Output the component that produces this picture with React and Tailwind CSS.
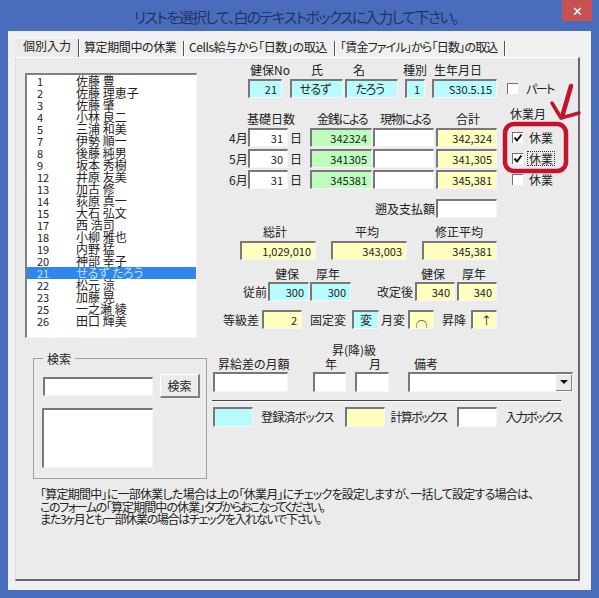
import React from 'react';

const staff = [
  ['1', '佐藤 豊'], ['2', '佐藤 理恵子'], ['3', '佐藤 肇'], ['4', '小林 良二'], ['5', '三浦 和美'],
  ['7', '伊勢 順一'], ['8', '後藤 純男'], ['9', '坂本 秀樹'], ['12', '井原 友美'], ['13', '加古 修'],
  ['14', '荻原 真一'], ['15', '大石 弘文'], ['17', '西 浩司'], ['18', '小柳 雅也'], ['19', '内野 猛'],
  ['20', '神部 幸子'], ['21', 'せるず たろう'], ['22', '松元 涼'], ['23', '加藤 晃'], ['25', '一之瀬 綾'], ['26', '田口 輝美'],
];

const tones = {
  white: 'bg-white',
  cyan: 'bg-[#b8fbfd]',
  yellow: 'bg-[#ffffc0]',
  green: 'bg-[#bdfcbd]',
};

// sunken win32 style text box
const Field = ({ tone = 'white', className = '', children }) => (
  <div className={`flex items-center justify-end overflow-hidden shrink-0 pr-[4px] text-[11px] leading-none border-t-2 border-l-2 border-t-[#787878] border-l-[#787878] border-r border-b border-r-[#f6f6f6] border-b-[#f6f6f6] ${tones[tone]} ${className}`}>
    {children}
  </div>
);

const Label = ({ className = '', children }) => (
  <div className={`shrink-0 h-[12px] leading-[12px] text-[12px] whitespace-nowrap text-center ${className}`}>{children}</div>
);

const CheckBox = ({ checked, className = '' }) => (
  <div className={`shrink-0 w-[11px] h-[11px] bg-white border-t border-l border-[#707070] ${className}`}>
    {checked && (
      <svg viewBox="0 0 10 10" className="w-[10px] h-[10px]">
        <path d="M1.5 4.5 L4 7.5 L8.5 1.5" fill="none" stroke="#111" strokeWidth="2" />
      </svg>
    )}
  </div>
);

const Tabs = () => (
  <div className="flex h-[20px] items-center text-[12px] leading-[12px] whitespace-nowrap">
    <div className="shrink-0 w-[63px] h-[20px] pl-[8px] pt-[2px] bg-[#ebebeb] border-t border-t-white">個別入力</div>
    <div className="shrink-0 w-[2px] h-[18px] mt-[2px] border-l border-r border-l-[#555] border-r-white" />
    <div className="shrink-0 ml-[4px] w-[92px] tracking-[-0.4px]">算定期間中の休業</div>
    <div className="shrink-0 ml-[7px] w-[2px] h-[15px] mt-[2px] border-l border-r border-l-[#555] border-r-white" />
    <div className="shrink-0 ml-[4px] w-[139px] tracking-[-0.4px]">Cells給与から「日数」の取込</div>
    <div className="shrink-0 ml-[6px] w-[2px] h-[15px] mt-[2px] border-l border-r border-l-[#555] border-r-white" />
    <div className="shrink-0 ml-[4px] w-[158px] tracking-[-0.8px]">「賃金ファイル」から「日数」の取込</div>
    <div className="shrink-0 ml-[6px] w-[2px] h-[15px] mt-[2px] border-l border-r border-l-[#555] border-r-white" />
  </div>
);

const StaffList = () => (
  <div className="ml-[9px] w-[172px] h-[265px] bg-white border-t-2 border-l-2 border-t-[#808080] border-l-[#808080] border-r border-b border-r-[#f6f6f6] border-b-[#f6f6f6]">
    {staff.map(([no, name]) => (
      <div key={no} className={`flex h-[12px] leading-[12px] text-[12px] ${no === '21' ? 'bg-[#3385ee] text-[#b8e8ff]' : 'text-[#222]'}`}>
        <div className="w-[49px] pl-[10px] text-[11px] shrink-0">{no}</div>
        <div className="whitespace-pre">{name}</div>
      </div>
    ))}
  </div>
);

const SearchGroup = () => (
  <div className="ml-[17px] mt-[20px] w-[174px] h-[121px] border border-[#a0a0a0]">
    <div className="w-fit -mt-[6px] ml-[9px] px-[4px] h-[12px] leading-[12px] text-[12px] bg-[#ebebeb]">検索</div>
    <div className="flex items-start mt-[9px]">
      <Field className="ml-[9px] mt-[3px] w-[110px] h-[19px]" />
      <div className="ml-[7px] w-[40px] h-[24px] flex items-center justify-center text-[12px] bg-[#ebebeb] border-t border-l border-t-white border-l-white border-r-2 border-b-2 border-r-[#808080] border-b-[#808080]">検索</div>
    </div>
    <Field className="ml-[8px] mt-[10px] w-[111px] h-[60px]" />
  </div>
);

const PayRow = ({ month, days, cash, total }) => (
  <div className="flex items-center h-[19px]">
    <Label className="ml-[17px] w-[16px]">{month}</Label>
    <Field className="ml-[3px] w-[40px] h-[19px]">{days}</Field>
    <Label className="ml-[2px] w-[12px]">日</Label>
    <Field tone="green" className="ml-[8px] w-[62px] h-[19px]">{cash}</Field>
    <Field className="ml-[1px] w-[61px] h-[19px]" />
    <Field tone="yellow" className="ml-[2px] w-[61px] h-[19px]">{total}</Field>
  </div>
);

const LeaveCheck = ({ checked, focused }) => (
  <div className="flex items-center h-[21px] ml-[15px]">
    <CheckBox checked={checked} />
    <div className={`ml-[4px] px-[1px] h-[15px] leading-[14px] text-[12px] border border-dotted ${focused ? 'border-[#333]' : 'border-transparent'}`}>休業</div>
  </div>
);

const RightPane = () => (
  <div className="w-[362px] shrink-0 pt-[6px]">
    <div className="flex">
      <Label className="ml-[38px] w-[38px]">健保No</Label>
      <Label className="ml-[23px] w-[12px]">氏</Label>
      <Label className="ml-[30px] w-[12px]">名</Label>
      <Label className="ml-[38px] w-[24px]">種別</Label>
      <Label className="ml-[7px] w-[48px]">生年月日</Label>
    </div>
    <div className="flex items-center mt-[3px]">
      <Field tone="cyan" className="ml-[36px] w-[34px] h-[19px]">21</Field>
      <Field tone="cyan" className="ml-[8px] w-[53px] h-[19px] !justify-center !text-[12px] tracking-[-0.8px]">せるず</Field>
      <Field tone="cyan" className="ml-[2px] w-[53px] h-[19px] !justify-center !text-[12px] tracking-[-0.8px]">たろう</Field>
      <Field tone="cyan" className="ml-[7px] w-[20px] h-[19px]">1</Field>
      <Field tone="cyan" className="ml-[7px] w-[65px] h-[19px]">S30.5.15</Field>
      <CheckBox className="ml-[10px]" />
      <Label className="ml-[8px] w-[26px] tracking-[-1.5px]">パート</Label>
    </div>

    <div className="flex mt-[10px]">
      <div className="w-[285px] shrink-0">
        <div className="flex mt-[5px]">
          <Label className="ml-[35px] w-[47px]">基礎日数</Label>
          <Label className="ml-[23px] w-[50px] tracking-[-1.2px]">金銭による</Label>
          <Label className="ml-[13px] w-[50px] tracking-[-1.2px]">現物による</Label>
          <Label className="ml-[26px] w-[24px]">合計</Label>
        </div>
        <div className="flex flex-col gap-[2px] mt-[3px]">
          <PayRow month="4月" days="31" cash="342324" total="342,324" />
          <PayRow month="5月" days="30" cash="341305" total="341,305" />
          <PayRow month="6月" days="31" cash="345381" total="345,381" />
        </div>
      </div>
      <div>
        <Label className="ml-[13px] w-[36px]">休業月</Label>
        <div className="mt-[7px]">
          <LeaveCheck checked />
          <LeaveCheck checked focused />
          <LeaveCheck />
        </div>
      </div>
    </div>

    <div className="flex items-center mt-[9px]">
      <Label className="ml-[163px] w-[60px]">遡及支払額</Label>
      <Field className="ml-[1px] w-[61px] h-[19px]" />
    </div>

    <div className="flex mt-[8px]">
      <Label className="ml-[51px] w-[24px]">総計</Label>
      <Label className="ml-[68px] w-[24px]">平均</Label>
      <Label className="ml-[56px] w-[48px]">修正平均</Label>
    </div>
    <div className="flex mt-[3px]">
      <Field tone="yellow" className="ml-[28px] w-[76px] h-[19px]">1,029,010</Field>
      <Field tone="yellow" className="ml-[15px] w-[76px] h-[19px]">343,003</Field>
      <Field tone="yellow" className="ml-[15px] w-[75px] h-[19px]">345,381</Field>
    </div>

    <div className="flex mt-[8px]">
      <Label className="ml-[63px] w-[24px]">健保</Label>
      <Label className="ml-[17px] w-[24px]">厚年</Label>
      <Label className="ml-[81px] w-[24px]">健保</Label>
      <Label className="ml-[17px] w-[24px]">厚年</Label>
    </div>
    <div className="flex items-center mt-[2px]">
      <Label className="ml-[31px] w-[24px]">従前</Label>
      <Field tone="cyan" className="ml-[1px] w-[41px] h-[19px]">300</Field>
      <Field tone="cyan" className="ml-[1px] w-[41px] h-[19px]">300</Field>
      <Label className="ml-[26px] w-[36px]">改定後</Label>
      <Field tone="yellow" className="ml-[2px] w-[40px] h-[19px]">340</Field>
      <Field tone="yellow" className="ml-[2px] w-[40px] h-[19px]">340</Field>
    </div>

    <div className="flex items-center mt-[9px]">
      <Label className="ml-[11px] w-[36px]">等級差</Label>
      <Field tone="yellow" className="ml-[3px] w-[40px] h-[19px]">2</Field>
      <Label className="ml-[8px] w-[36px]">固定変</Label>
      <Field tone="cyan" className="ml-[6px] w-[27px] h-[19px] !justify-center !pr-0 !text-[12px]">変</Field>
      <Label className="ml-[2px] w-[24px]">月変</Label>
      <Field tone="yellow" className="ml-[3px] w-[26px] h-[19px] !justify-center !pr-0 !items-start pt-[8px] !text-[12px]">○</Field>
      <Label className="ml-[8px] w-[24px]">昇降</Label>
      <Field tone="yellow" className="ml-[5px] w-[26px] h-[19px]">↑</Field>
    </div>

    <Label className="ml-[118px] mt-[15px] w-[48px]">昇(降)級</Label>
    <div className="flex mt-[2px]">
      <Label className="ml-[6px] w-[70px]">昇給差の月額</Label>
      <Label className="ml-[37px] w-[12px]">年</Label>
      <Label className="ml-[32px] w-[12px]">月</Label>
      <Label className="ml-[33px] w-[24px]">備考</Label>
    </div>
    <div className="flex mt-[2px]">
      <Field className="ml-[1px] w-[75px] h-[20px]" />
      <Field className="ml-[25px] w-[33px] h-[20px]" />
      <Field className="ml-[9px] w-[34px] h-[20px]" />
      <Field className="ml-[19px] w-[165px] h-[20px] !pr-0">
        <div className="w-[16px] h-[16px] flex items-center justify-center bg-[#ebebeb] border-r border-b border-[#808080]">
          <svg viewBox="0 0 8 4" className="w-[8px] h-[4px]">
            <path d="M0 0 H8 L4 4 Z" fill="#111" />
          </svg>
        </div>
      </Field>
    </div>

    <div className="mt-[8px] w-[349px] h-[2px] border-t border-b border-t-[#444] border-b-white" />

    <div className="flex items-center mt-[5px]">
      <Field tone="cyan" className="ml-[1px] w-[40px] h-[20px]" />
      <Label className="ml-[8px] w-[69px] tracking-[-0.8px]">登録済ボックス</Label>
      <Field tone="yellow" className="ml-[15px] w-[40px] h-[20px]" />
      <Label className="ml-[5px] w-[57px] tracking-[-1.7px]">計算ボックス</Label>
      <Field className="ml-[10px] w-[40px] h-[20px]" />
      <Label className="ml-[8px] w-[57px] tracking-[-1.7px]">入力ボックス</Label>
    </div>
  </div>
);

// hand drawn red marking on top of the screenshot
const RedMark = () => (
  <svg className="absolute left-0 top-0 pointer-events-none" width="599" height="598" viewBox="0 0 599 598">
    <rect x="505" y="124" width="61" height="47" rx="9" fill="none" stroke="#c4122f" strokeWidth="4.5" />
    <path d="M571 86 L562 117" fill="none" stroke="#c4122f" strokeWidth="4.5" strokeLinecap="round" />
    <path d="M552 103 L561 118 L579 113" fill="none" stroke="#c4122f" strokeWidth="3.5" strokeLinecap="round" strokeLinejoin="round" />
  </svg>
);

const App = () => (
  <div className="relative w-[599px] h-[598px] overflow-hidden bg-[#4a6cbd] text-[#222] font-['Noto_Sans_CJK_JP','Noto_Sans',sans-serif] [font-feature-settings:'palt']">
    <div className="h-[31px] flex items-center justify-center pt-[3px] pr-[7px] text-[15px] tracking-[-1.6px] text-[#1f3564]">
      リストを選択して、白のテキストボックスに入力して下さい。
    </div>
    <div className="absolute right-[7px] top-0 w-[30px] h-[21px] flex items-center justify-center bg-[#c75050] text-white text-[13px] leading-none">✕</div>

    <div className="mx-[8px] h-[559px] bg-[#f0f0f0] pt-[6px] pl-[7px]">
      <Tabs />
      <div className="w-[565px] h-[524px] bg-[#ebebeb] border-t border-t-white border-l border-l-[#dcdcdc] border-r-2 border-b-2 border-r-[#666] border-b-[#666]">
        <div className="flex items-start">
          <div className="w-[196px] shrink-0 pt-[15px]">
            <StaffList />
            <SearchGroup />
          </div>
          <RightPane />
        </div>
        <div className="mt-[9px] ml-[24px] text-[12px] leading-[12.5px] whitespace-nowrap">
          <div className="tracking-[-0.75px]">「算定期間中」に一部休業した場合は上の「休業月」にチェックを設定しますが、一括して設定する場合は、</div>
          <div>
            <span className="tracking-[-1.4px]">このフォームの</span>
            <span className="tracking-[-0.9px]">「算定期間中の休業」</span>
            <span className="tracking-[-1.8px]">タブからおこなってください。</span>
          </div>
          <div className="tracking-[-1.3px]">また3ヶ月とも一部休業の場合はチェックを入れないで下さい。</div>
        </div>
      </div>
    </div>
    <RedMark />
  </div>
);

export default App;
